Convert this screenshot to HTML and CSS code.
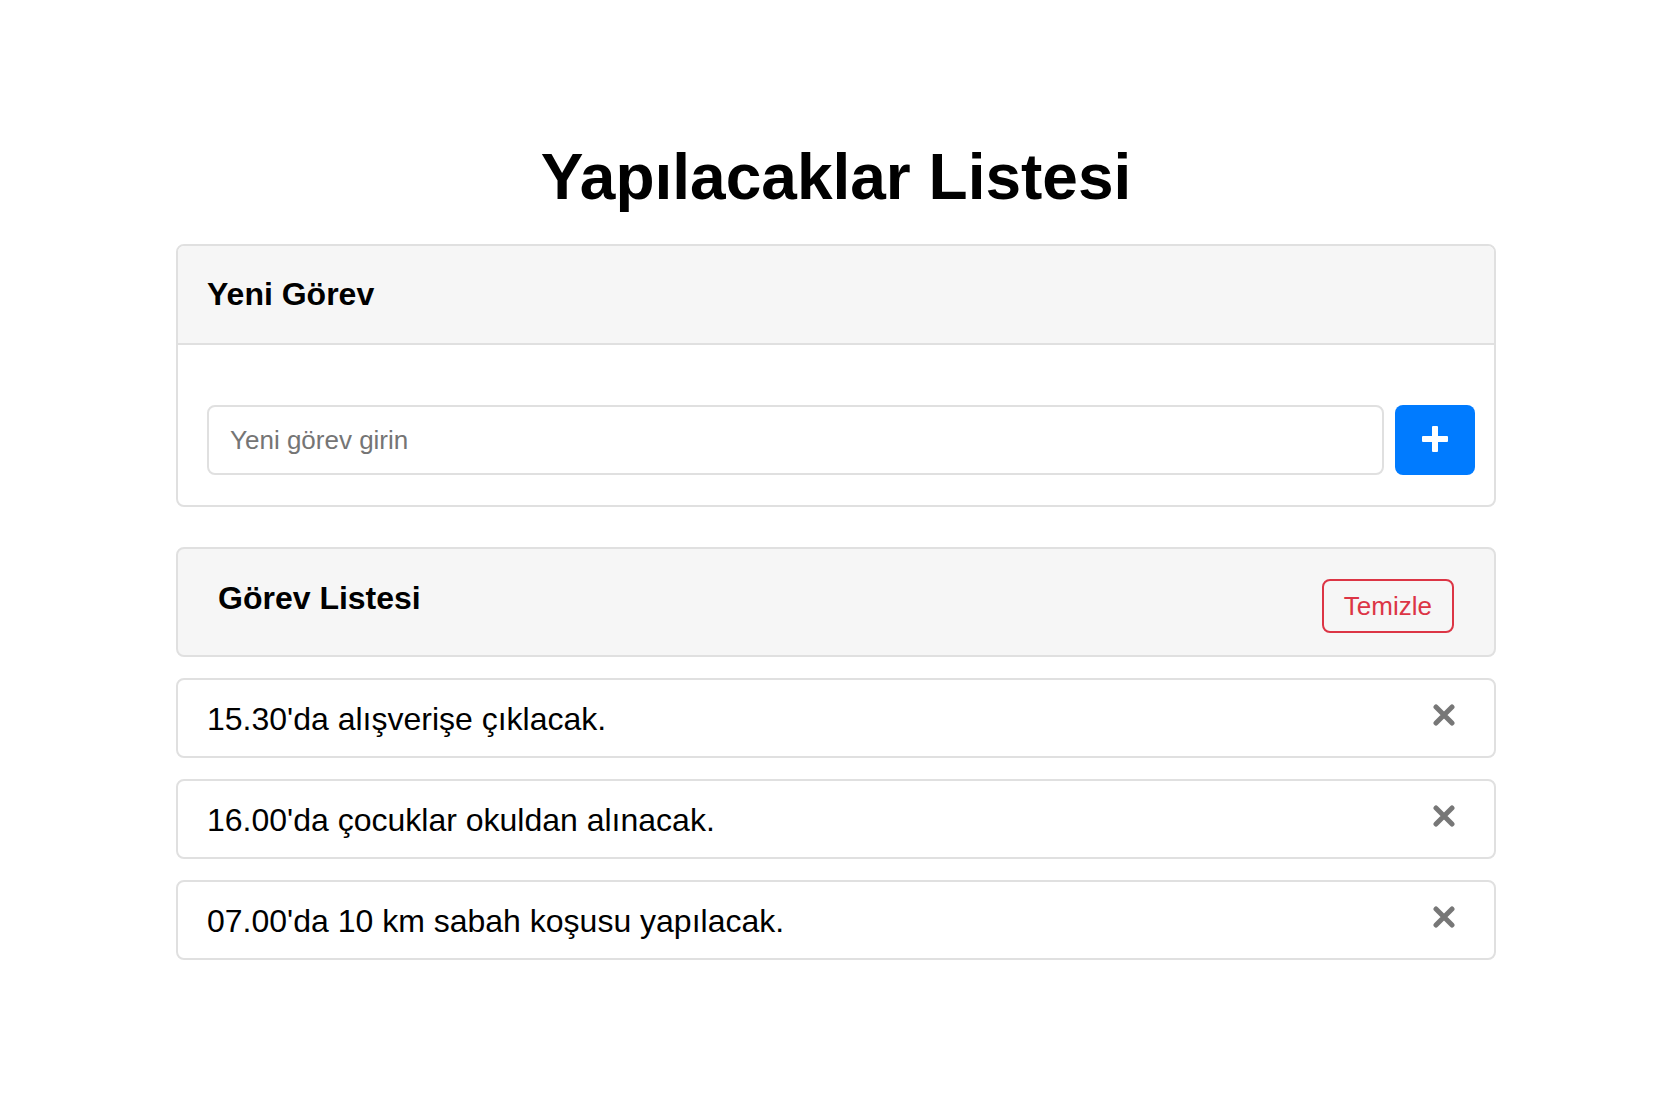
FILE: index.html
```html
<!DOCTYPE html>
<html lang="tr">
<head>
<meta charset="utf-8">
<title>Yapılacaklar Listesi</title>
<link rel="stylesheet" href="styles.css">
</head>
<body>
<main class="page">
  <h1 class="page-title">Yapılacaklar Listesi</h1>

  <section class="card">
    <header class="card-header">
      <h2 class="card-title">Yeni Görev</h2>
    </header>
    <div class="card-body">
      <form class="add-form">
        <input class="task-input" type="text" placeholder="Yeni görev girin">
        <button class="add-btn" type="button" aria-label="Ekle">
          <svg width="26" height="26" viewBox="0 0 26 26" aria-hidden="true">
            <rect x="10" y="0" width="6" height="26" rx="1" fill="#fff"/>
            <rect x="0" y="10" width="26" height="6" rx="1" fill="#fff"/>
          </svg>
        </button>
      </form>
    </div>
  </section>

  <section class="list-header">
    <h2 class="card-title">Görev Listesi</h2>
    <button class="clear-btn" type="button">Temizle</button>
  </section>

  <ul class="task-list">
    <li class="task">
      <span class="task-text">15.30'da alışverişe çıklacak.</span>
      <button class="remove-btn" type="button" aria-label="Sil">
        <svg width="22" height="22" viewBox="0 0 22 22" aria-hidden="true"><path d="M3 3 L19 19 M19 3 L3 19" stroke="#777" stroke-width="5" stroke-linecap="round"/></svg>
      </button>
    </li>
    <li class="task">
      <span class="task-text">16.00'da çocuklar okuldan alınacak.</span>
      <button class="remove-btn" type="button" aria-label="Sil">
        <svg width="22" height="22" viewBox="0 0 22 22" aria-hidden="true"><path d="M3 3 L19 19 M19 3 L3 19" stroke="#777" stroke-width="5" stroke-linecap="round"/></svg>
      </button>
    </li>
    <li class="task">
      <span class="task-text">07.00'da 10 km sabah koşusu yapılacak.</span>
      <button class="remove-btn" type="button" aria-label="Sil">
        <svg width="22" height="22" viewBox="0 0 22 22" aria-hidden="true"><path d="M3 3 L19 19 M19 3 L3 19" stroke="#777" stroke-width="5" stroke-linecap="round"/></svg>
      </button>
    </li>
  </ul>
</main>
</body>
</html>
```

FILE: styles.css
```css
* {
  box-sizing: border-box;
}

body {
  margin: 0;
  padding: 0 8px 0 0;
  background: #ffffff;
  color: #000;
  font-family: "Liberation Sans", Arial, Helvetica, sans-serif;
}

.page {
  width: 1320px;
  margin: 0 auto;
  padding-top: 141px;
}

.page-title {
  margin: 0 0 30px;
  font-size: 64px;
  line-height: 73px;
  font-weight: 700;
  text-align: center;
}

.card {
  border: 2px solid #e0e0e0;
  border-radius: 8px;
  overflow: hidden;
  background: #fff;
}

.card-header {
  background: #f6f6f6;
  border-bottom: 2px solid #e0e0e0;
  padding: 29px 30px 30px 29px;
}

.card-title {
  margin: 0;
  font-size: 32px;
  line-height: 38px;
  font-weight: 700;
}

.card-body {
  padding: 60px 19px 30px 29px;
}

.add-form {
  display: flex;
  gap: 11px;
  margin: 0;
}

.task-input {
  flex: 1;
  height: 70px;
  border: 2px solid #e0e0e0;
  border-radius: 8px;
  padding: 0 21px;
  font-family: inherit;
  font-size: 26px;
  color: #000;
  outline: none;
}

.task-input::placeholder {
  color: #757575;
}

.add-btn {
  width: 80px;
  height: 70px;
  border: none;
  border-radius: 8px;
  background: #007bff;
  display: flex;
  align-items: center;
  justify-content: center;
  padding: 0 0 3px;
  cursor: pointer;
}

.list-header {
  margin-top: 40px;
  display: flex;
  justify-content: space-between;
  align-items: flex-start;
  background: #f6f6f6;
  border: 2px solid #e0e0e0;
  border-radius: 8px;
  padding: 30px 40px 22px 40px;
}

.clear-btn {
  height: 54px;
  padding: 0 20px;
  border: 2px solid #dc3545;
  border-radius: 8px;
  background: transparent;
  color: #dc3545;
  font-family: inherit;
  font-size: 26px;
  cursor: pointer;
}

.task-list {
  list-style: none;
  margin: 21px 0 0;
  padding: 0;
  display: flex;
  flex-direction: column;
  gap: 21px;
}

.task {
  height: 80px;
  display: flex;
  align-items: center;
  justify-content: space-between;
  border: 2px solid #e0e0e0;
  border-radius: 8px;
  padding: 0 39px 0 29px;
}

.task-text {
  font-size: 32px;
  line-height: 38px;
  padding-top: 2px;
}

.remove-btn {
  border: none;
  background: transparent;
  padding: 0;
  margin-bottom: 6px;
  width: 22px;
  height: 22px;
  display: flex;
  cursor: pointer;
}
```
